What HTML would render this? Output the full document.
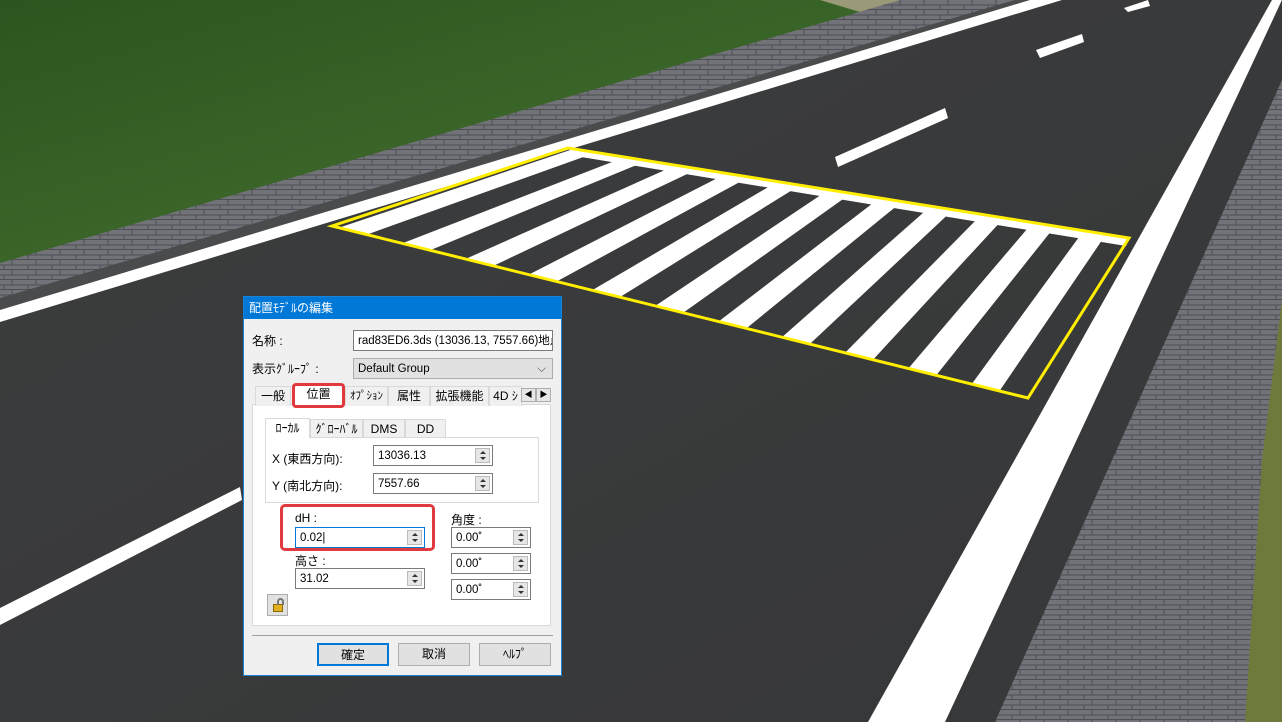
<!DOCTYPE html>
<html><head><meta charset="utf-8"><style>
*{margin:0;padding:0;box-sizing:border-box}
body{width:1282px;height:722px;overflow:hidden;position:relative;background:#3a3b3b;font-family:"Liberation Sans","Noto Sans CJK JP",sans-serif;font-size:12px;color:#000}
svg{position:absolute;left:0;top:0}
.a{position:absolute}
.dlg{position:absolute;left:243px;top:296px;width:319px;height:380px;background:#f0f0f0;border:1px solid #1883d7}
.title{position:absolute;left:0;top:0;width:317px;height:22px;background:#0078d7;color:#fff;font-size:12px;line-height:22px;padding-left:5px}
.inp{position:absolute;background:#fff;border:1px solid #7a7a7a;height:21px;line-height:20px;padding-left:4px;font-size:11.5px;white-space:nowrap;overflow:hidden}
.spin{position:absolute;right:2px;top:2px;width:15px;height:15px;background:#e6e6e6;border:1px solid #bbb}
.spin:before{content:"";position:absolute;left:4px;top:2px;border:3px solid transparent;border-bottom:3px solid #333;border-top:0}
.spin:after{content:"";position:absolute;left:4px;top:8px;border:3px solid transparent;border-top:3px solid #333;border-bottom:0}
.tab{position:absolute;height:20px;line-height:19px;text-align:center;background:#f0f0f0;border:1px solid #d9d9d9;border-bottom:none;font-size:12px}
.btn{position:absolute;top:346px;width:72px;height:23px;background:#e1e1e1;border:1px solid #adadad;text-align:center;line-height:21px}
.lab{position:absolute;font-size:12px}
</style></head><body>
<svg width="1282" height="722" viewBox="0 0 1282 722">
<defs>
<linearGradient id="g" x1="0" y1="0" x2="1" y2="1"><stop offset="0" stop-color="#2c5420"/><stop offset=".5" stop-color="#3a6528"/><stop offset="1" stop-color="#4a6632"/></linearGradient>
<linearGradient id="r" x1="0" y1="0" x2="1" y2="1"><stop offset="0" stop-color="#3c3d3e"/><stop offset="1" stop-color="#363738"/></linearGradient>
<pattern id="br" width="24" height="10" patternUnits="userSpaceOnUse"><rect width="24" height="10" fill="#727379"/><path d="M0 9.5H24M12 0V5M0 5H24M4 5V10" stroke="#4e4f55" stroke-width="1"/></pattern>
</defs>
<rect width="1282" height="722" fill="url(#r)"/>
<polygon points="0,0 950,0 0,265" fill="url(#g)"/>
<polygon points="820,0 950,0 950,12 860,12" fill="#9a9a78"/>
<polygon points="0,263 900,0 1015,0 0,300" fill="url(#br)"/>
<polygon points="0,298 1015,0 1030,0 0,310" fill="#4a4b4d"/>
<polygon points="0,310 1030,0 1062,0 0,322" fill="#fff"/>
<polygon points="0,608 240,487 242,500 0,625" fill="#fff"/>
<polygon points="835,157 945,108 948,118 838,167" fill="#fff"/>
<polygon points="1036,50 1082,34 1084,42 1040,58" fill="#fff"/>
<polygon points="1124,8 1148,0 1150,6 1128,12" fill="#fff"/>
<polygon points="1272,0 1282,0 945,722 868,722" fill="#fff"/>
<polygon points="1282,0 1282,40 1232,722 950,722" fill="#38393a"/>
<polygon points="1282,80 1282,722 995,722" fill="url(#br)"/>
<polygon points="1282,300 1282,722 1245,722 1262,460" fill="#6e7a3c"/>
<g id="cw" fill="#fff"></g>
<polygon points="332,226 568,148 1129,238 1028,398" fill="none" stroke="#ffee00" stroke-width="3"/>
</svg>
<script>
var g=document.getElementById('cw'),n=11,s='';
function L(a,b,t){return [a[0]+(b[0]-a[0])*t,a[1]+(b[1]-a[1])*t]}
var T0=[568,148],T1=[1129,238],B0=[332,226],B1=[1028,398];
for(var i=0;i<n;i++){var t0=i/n+0.01,t1=(i+0.55)/n;
var p=[L(T0,T1,t0),L(T0,T1,t1),L(B0,B1,t1),L(B0,B1,t0)];
s+='<polygon points="'+p.map(function(q){return q[0].toFixed(1)+','+q[1].toFixed(1)}).join(' ')+'"/>';}
s+='<polygon points="568,148 1129,238 1126,246 575,156"/>';
g.innerHTML=s;
</script>
<div class="dlg">
<div class="title">配置ﾓﾃﾞﾙの編集</div>
<div class="lab" style="left:8px;top:35px">名称 :</div>
<div class="inp" style="left:109px;top:33px;width:200px">rad83ED6.3ds (13036.13, 7557.66)地点</div>
<div class="lab" style="left:8px;top:63px">表示ｸﾞﾙｰﾌﾟ :</div>
<div class="inp" style="left:109px;top:61px;width:200px;background:#e1e1e1;border-color:#adadad">Default Group<span style="position:absolute;right:6px;top:0;color:#555">⌵</span></div>
<div class="a" style="left:8px;top:107px;width:299px;height:222px;background:#fff;border:1px solid #d9d9d9"></div>
<div class="tab" style="left:11px;top:89px;width:36px">一般</div>
<div class="tab" style="left:49px;top:87px;width:51px;height:21px;background:#fff">位置</div>
<div class="tab" style="left:101px;top:89px;width:43px;font-size:11px">ｵﾌﾟｼｮﾝ</div>
<div class="tab" style="left:144px;top:89px;width:42px">属性</div>
<div class="tab" style="left:186px;top:89px;width:59px">拡張機能</div>
<div class="tab" style="left:245px;top:89px;width:33px">4D ｼ</div>
<div class="a" style="left:277px;top:91px;width:15px;height:14px;background:#e6e6e6;border:1px solid #adadad;font-size:8px;text-align:center;line-height:12px">◀</div>
<div class="a" style="left:292px;top:91px;width:15px;height:14px;background:#e6e6e6;border:1px solid #adadad;font-size:8px;text-align:center;line-height:12px">▶</div>
<div class="a" style="left:48px;top:86px;width:53px;height:25px;border:3px solid #e0393e;border-radius:4px"></div>
<div class="a" style="left:21px;top:140px;width:274px;height:66px;border:1px solid #d9d9d9"></div>
<div class="tab" style="left:21px;top:121px;width:45px;background:#fff;height:20px">ﾛｰｶﾙ</div>
<div class="tab" style="left:66px;top:122px;width:53px;height:18px">ｸﾞﾛｰﾊﾞﾙ</div>
<div class="tab" style="left:119px;top:122px;width:42px;height:18px">DMS</div>
<div class="tab" style="left:161px;top:122px;width:41px;height:18px">DD</div>
<div class="lab" style="left:28px;top:153px">X (東西方向):</div>
<div class="inp" style="left:129px;top:148px;width:120px">13036.13<div class="spin"></div></div>
<div class="lab" style="left:28px;top:180px">Y (南北方向):</div>
<div class="inp" style="left:129px;top:176px;width:120px">7557.66<div class="spin"></div></div>
<div class="a" style="left:36px;top:207px;width:155px;height:47px;border:3px solid #e0393e;border-radius:5px"></div>
<div class="lab" style="left:51px;top:214px">dH :</div>
<div class="inp" style="left:51px;top:230px;width:130px;border-color:#0078d7">0.02|<div class="spin"></div></div>
<div class="lab" style="left:51px;top:255px">高さ :</div>
<div class="inp" style="left:51px;top:271px;width:130px">31.02<div class="spin"></div></div>
<div class="lab" style="left:207px;top:214px">角度 :</div>
<div class="inp" style="left:207px;top:230px;width:80px">0.00˚<div class="spin"></div></div>
<div class="inp" style="left:207px;top:256px;width:80px">0.00˚<div class="spin"></div></div>
<div class="inp" style="left:207px;top:282px;width:80px">0.00˚<div class="spin"></div></div>
<div class="a" style="left:23px;top:297px;width:21px;height:22px;background:#e1e1e1;border:1px solid #adadad"><div class="a" style="left:5px;top:9px;width:10px;height:8px;background:#e0b020;border:1px solid #8a6a00"></div><div class="a" style="left:9px;top:3px;width:7px;height:7px;border:2px solid #777;border-bottom:none;border-radius:4px 4px 0 0"></div></div>
<div class="a" style="left:8px;top:338px;width:301px;height:1px;background:#a0a0a0"></div>
<div class="btn" style="left:73px;border:2px solid #0078d7">確定</div>
<div class="btn" style="left:154px">取消</div>
<div class="btn" style="left:235px">ﾍﾙﾌﾟ</div>
</div>
</body></html>
